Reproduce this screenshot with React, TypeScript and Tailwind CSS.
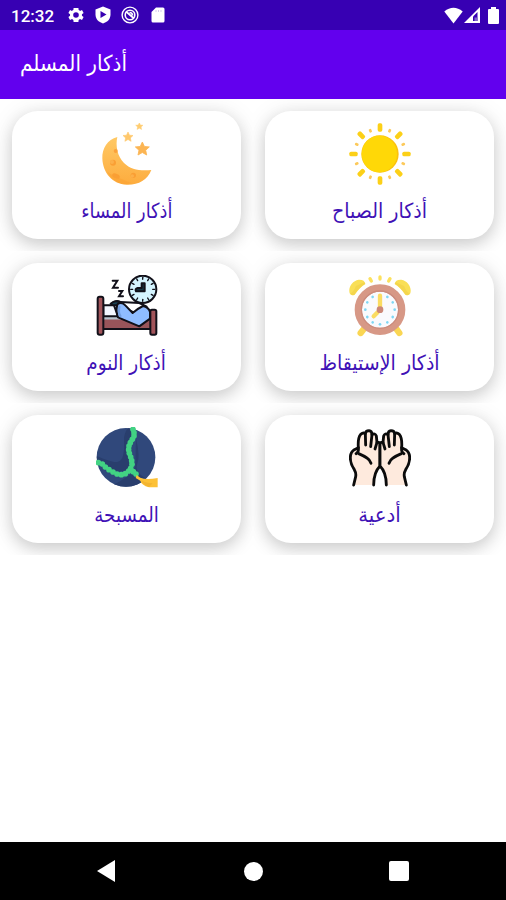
import React from "react";

const FONT = "font-['DejaVu_Sans','Noto_Sans',sans-serif]";

function Star({ x, y, r, fill }: { x: number; y: number; r: number; fill: string }) {
  return (
    <path
      transform={`translate(${x} ${y}) scale(${r})`}
      d="M0-1L.3-.36L1-.3L.48.18L.62.86L0 .5L-.62.86L-.48.18L-1-.3L-.3-.36Z"
      fill={fill}
      stroke={fill}
      strokeWidth=".12"
      strokeLinejoin="round"
    />
  );
}

function Moon() {
  return (
    <svg viewBox="18 24 186 186" className="size-[62px]">
      <defs>
        <linearGradient id="moon" x1="0" y1="0" x2="0" y2="1">
          <stop offset="0" stopColor="#ffc965" />
          <stop offset="1" stopColor="#fdac3e" />
        </linearGradient>
      </defs>
      <path d="M82 66C52 74 36 100 37 130C38 174 68 208 110 209C145 210 172 196 184 165C150 168 122 164 102 144C82 124 76 92 82 66Z" fill="url(#moon)" />
      <path d="M52 170C70 184 96 192 124 204C98 213 66 200 52 170Z" fill="#fba02f" opacity=".5" />
      <circle cx="69" cy="143" r="9" fill="#fa9f34" />
      <circle cx="66" cy="141" r="6" fill="#fcb04a" />
      <circle cx="77" cy="108" r="6" fill="#fba23a" />
      <circle cx="130" cy="181" r="8" fill="#fa9f34" />
      <circle cx="127" cy="183" r="5" fill="#fcb04a" />
      <ellipse cx="78" cy="183" rx="12" ry="7" fill="#fa9f34" transform="rotate(25 78 183)" />
      <Star x={148} y={34} r={11} fill="#ffcd71" />
      <Star x={114} y={66} r={15} fill="#ffc86c" />
      <Star x={157} y={102} r={21} fill="#fcb553" />
    </svg>
  );
}

function Sun() {
  return (
    <svg viewBox="27 24 186 186" className="size-[62px]">
      {[0, 45, 90, 135, 180, 225, 270, 315].map((a) => (
        <rect key={a} x="113" y="25" width="14" height="25" rx="5" fill="#fcd017" transform={`rotate(${a} 120 117)`} />
      ))}
      {[22.5, 67.5, 112.5, 157.5, 202.5, 247.5, 292.5, 337.5].map((a) => (
        <rect key={a} x="116" y="36" width="8" height="11" rx="3" fill="#fcc95a" transform={`rotate(${a} 120 117)`} />
      ))}
      <circle cx="120" cy="117" r="56" fill="#fbc20d" />
      <ellipse cx="118" cy="117" rx="53" ry="55" fill="#ffd807" />
    </svg>
  );
}

function Bed() {
  return (
    <svg viewBox="18 21 186 186" className="size-[62px]">
      <g stroke="#111019" strokeWidth="6" strokeLinejoin="round" strokeLinecap="round">
        <path d="M40 112L72 112L84 145H40Z" fill="#f3f7ff" />
        <rect x="39" y="148" width="146" height="35" fill="#99545a" />
        <path d="M40 151H92" stroke="#b8c3ce" strokeWidth="7" />
        <path d="M66 106Q78 94 92 102L148 105L170 116L132 133Z" fill="#fff" />
        <path d="M62 107Q76 94 91 104L84 112L67 111Z" fill="#1b4153" />
        <path d="M83 108Q96 101 106 112L128 135Q144 121 159 114Q177 118 180 132V152L148 175L84 148Q76 126 83 108Z" fill="#8fbcff" />
        <path d="M88 116Q84 133 91 144" fill="none" stroke="#719ddf" strokeWidth="7" />
        <rect x="23" y="86" width="17" height="114" rx="6" fill="#a2545a" />
        <rect x="181" y="125" width="18" height="75" rx="5" fill="#a2545a" />
        <circle cx="158" cy="64" r="41" fill="#d4f4ff" />
        <g strokeWidth="4">
          {[0, 30, 60, 90, 120, 150, 180, 210, 240, 270, 300, 330].map((a) => (
            <path key={a} d="M158 28V34" transform={`rotate(${a} 158 64)`} />
          ))}
        </g>
        <path d="M155 46H164V70H138Q134 62 143 60H155Z" fill="#163644" />
        <g fill="none" strokeWidth="6" strokeLinejoin="miter">
          <path d="M68 38H82L69 59H84" />
          <path d="M87 69H97L87 85H99" />
        </g>
      </g>
    </svg>
  );
}

function AlarmClock() {
  return (
    <svg viewBox="27 21 186 186" className="size-[62px]">
      <g stroke="#fad653" strokeWidth="19" strokeLinecap="round">
        <path d="M73 181L62 195M168 181L178 195" />
      </g>
      <path d="M29 76C24 58 36 39 56 35Q74 34 76 48Q60 57 44 80Q33 85 29 76Z" fill="#f9df56" />
      <path d="M211 76C216 58 204 39 184 35Q166 34 164 48Q180 57 196 80Q207 85 211 76Z" fill="#f9df56" />
      <path d="M32 77Q44 67 48 54L73 43L76 48Q60 57 44 80Q36 84 32 77ZM208 77Q196 67 192 54L167 43L164 48Q180 57 196 80Q204 84 208 77Z" fill="#f0cd42" opacity=".5" />
      <g stroke="#fce15e" strokeWidth="10" strokeLinecap="round">
        <path d="M120 27V33M90 32L94 39M150 32L146 39" />
      </g>
      <circle cx="120" cy="125" r="65" fill="#fafafd" stroke="#d79886" strokeWidth="22" />
      <circle cx="120" cy="125" r="56" fill="none" stroke="#cb8b7d" strokeWidth="4" />
      {[30, 60, 90, 120, 150, 180, 210, 240, 270, 300, 330].map((a) => (
        <rect key={a} x="116" y="77" width="8" height="8" rx="4" fill="#80d7f4" transform={`rotate(${a} 120 125)`} />
      ))}
      <path d="M120 83V119" stroke="#fbdc61" strokeWidth="13" strokeLinecap="round" />
      <path d="M113 133L101 145" stroke="#fbdc61" strokeWidth="13" strokeLinecap="round" />
      <circle cx="120" cy="125" r="10" fill="#cc8777" />
    </svg>
  );
}

const BEADS = [
  [129, 28], [132, 38], [132, 48], [127, 58], [121, 68], [117, 78], [116, 89], [118, 100], [122, 111], [125, 122], [126, 133], [122, 145],
  [25, 128], [37, 132], [46, 141], [57, 149], [69, 156], [81, 162], [94, 164], [106, 161], [116, 153], [130, 155], [138, 162],
];

function PrayerBeads() {
  return (
    <svg viewBox="18 21 186 186" className="size-[62px]">
      <defs>
        <clipPath id="disc">
          <circle cx="108" cy="112" r="88" />
        </clipPath>
      </defs>
      <circle cx="108" cy="112" r="88" fill="#30487b" />
      <g clipPath="url(#disc)">
        <path d="M116 21C92 52 108 69 100 102C94 136 72 130 20 108V128Q66 165 110 150Q128 132 125 82L136 36Z" fill="#293e6d" />
        <path d="M138 55Q151 110 142 131Q130 158 181 182L149 201H57Q91 185 120 164L136 141Z" fill="#293e6d" />
      </g>
      {BEADS.map(([x, y]) => (
        <circle key={`${x}-${y}`} cx={x} cy={y} r="8.5" fill="#42d283" />
      ))}
      <path d="M140 165L151 173Q168 181 203 174V202H177Q154 195 151 182L137 174Z" fill="#fdc136" />
      <path d="M153 180Q169 190 188 190L177 201Q158 195 153 180Z" fill="#f3b430" />
    </svg>
  );
}

function Hand() {
  return (
    <g stroke="#0b0b0b" strokeWidth="8.5" strokeLinecap="round" strokeLinejoin="round">
      <path
        stroke="none"
        fill="#feeadd"
        d="M41 195L47 170Q49 159 43 149Q31 132 31 113Q31 97 43 89L53 83Q53 53 62 43Q70 36 76 41Q77 30 87 30Q96 31 96 44Q105 38 109 48L111 65Q120 63 120 76V138Q101 157 101 195Z"
      />
      <path
        fill="none"
        d="M41 195L47 170Q49 159 43 149Q31 132 31 113Q31 97 43 89L55 83Q53 53 62 43Q70 36 76 41Q77 32 87 32Q96 33 96 44Q105 38 109 48L111 67Q120 65 120 76V138Q101 157 101 195"
      />
      <path fill="none" d="M55 83Q57 96 48 101M56 101Q72 108 81 114Q89 119 93 130M76 41L77 75M96 44L92 80M111 67L105 87" />
    </g>
  );
}

function Hands() {
  return (
    <svg viewBox="27 21 186 186" className="size-[62px]">
      <Hand />
      <g transform="translate(240 0) scale(-1 1)">
        <Hand />
      </g>
    </svg>
  );
}

const CARDS = [
  { label: "أذكار الصباح", Icon: Sun, scale: "scale-y-110" },
  { label: "أذكار المساء", Icon: Moon, scale: "scale-x-[0.935] scale-y-110" },
  { label: "أذكار الإستيقاظ", Icon: AlarmClock, scale: "scale-y-110" },
  { label: "أذكار النوم", Icon: Bed, scale: "scale-x-[0.97] scale-y-110" },
  { label: "أدعية", Icon: Hands, scale: "scale-x-[1.04] scale-y-110" },
  { label: "المسبحة", Icon: PrayerBeads, scale: "scale-x-[0.96] scale-y-110" },
];

function StatusBar() {
  return (
    <div className="flex h-[30px] items-center bg-[#3700b3] pl-[11px] pr-[7px] text-white">
      <span className="w-[45px] pt-0.5 font-['Roboto',sans-serif] text-[17px] leading-none font-medium">12:32</span>
      <svg viewBox="2 2 20 20" className="ml-3 size-4 fill-current">
        <path d="M19.4 13a7.8 7.8 0 0 0 0-2l2.1-1.6-2-3.5-2.5 1a7.7 7.7 0 0 0-1.7-1L15 3.3H9l-.3 2.6a7.7 7.7 0 0 0-1.7 1l-2.500-1-2 3.5L4.600 11a7.8 7.8 0 0 0 0 2l-2.1 1.6 2 3.5 2.5-1a7.7 7.7 0 0 0 1.7 1l.3 2.6h6l.3-2.6a7.7 7.7 0 0 0 1.7-1l2.5 1 2-3.5zM12 15.500a3.5 3.5 0 1 1 0-7 3.5 3.5 0 0 1 0 7Z" />
      </svg>
      <svg viewBox="0 0 16 18" className="ml-[11px] h-[18px] w-4">
        <path d="M8 .5L15.5 3.5V8.500C15.5 13 12.5 16 8 17.5C3.5 16 .5 13 .5 8.5V3.5Z" fill="white" />
        <path d="M5.5 5L11.5 8.5L5.5 12Z" fill="#3700b3" />
      </svg>
      <svg viewBox="0 0 18 18" className="ml-2.5 size-[18px]" fill="none" stroke="white">
        <circle cx="9" cy="9" r="7.9" strokeWidth="1.4" />
        <circle cx="9" cy="9" r="4.8" strokeWidth="1.6" />
        <path d="M5 5.500L13 12.500M8.500 6.500Q11.500 6.500 11.5 9.500" strokeWidth="1.7" />
      </svg>
      <svg viewBox="0 0 14 16" className="ml-3 h-4 w-3.5">
        <path d="M5 .5H12Q13.5 .5 13.5 2V14Q13.5 15.5 12 15.5H2Q.5 15.5 .5 14V5Z" fill="white" />
        <path d="M5 3V5M7.500 3V5M10 3V5" stroke="#d5c9ee" />
      </svg>
      <div className="ml-auto flex items-center">
        <svg viewBox="0 0 19 17" className="h-[17px] w-[19px] fill-white">
          <path d="M.3 4.500Q9.5-3 18.7 4.500L9.500 16.5Z" />
        </svg>
        <svg viewBox="0 0 16 16" className="ml-px size-4">
          <path d="M0 16L16 0V16Z" fill="white" />
          <path d="M9 9.500L13.5 5V14H9Z" fill="#3700b3" />
          <path d="M10.500 10.500H13.500V14H10.500Z" fill="#8166c8" />
        </svg>
        <svg viewBox="0 0 11 17" className="ml-2 h-[17px] w-[11px] fill-white">
          <path d="M3 0H8V2H10Q11 2 11 3V16Q11 17 10 17H1Q0 17 0 16V3Q0 2 1 2H3Z" />
        </svg>
      </div>
    </div>
  );
}

export default function App() {
  return (
    <div className={`flex h-[900px] w-[506px] flex-col overflow-hidden bg-white ${FONT}`}>
      <StatusBar />
      <header className="flex h-[68.5px] items-center bg-[#6200ee] px-5 text-white">
        <h1 dir="rtl" className="scale-y-110 pb-0.5 text-[20px] leading-8 whitespace-nowrap">أذكار المسلم</h1>
      </header>
      <main className="flex-1">
        {[0, 2, 4].map((start) => (
          <div key={start} dir="rtl" className="grid h-[152px] grid-cols-2 overflow-hidden">
            {CARDS.slice(start, start + 2).map(({ label, Icon, scale }) => (
              <div key={label} className="overflow-hidden px-3 pt-3">
                <div className="flex h-[128px] flex-col items-center rounded-[26px] bg-white pt-[12.5px] shadow-[0_6px_16px_rgba(0,0,0,0.14),0_2px_24px_rgba(0,0,0,0.10)]">
                  <Icon />
                  <span className={`mt-[9px] text-[19px] leading-8 whitespace-nowrap text-[#3f12b6] ${scale}`}>{label}</span>
                </div>
              </div>
            ))}
          </div>
        ))}
      </main>
      <nav className="flex h-[58px] shrink-0 items-center bg-black pl-[97px]">
        <svg viewBox="0 0 18 22" className="h-[22px] w-[18px] fill-white">
          <path d="M0 11L18 0V22Z" />
        </svg>
        <div className="ml-[129px] size-[19px] rounded-full bg-white" />
        <div className="ml-[126px] size-5 rounded-xs bg-white" />
      </nav>
    </div>
  );
}
